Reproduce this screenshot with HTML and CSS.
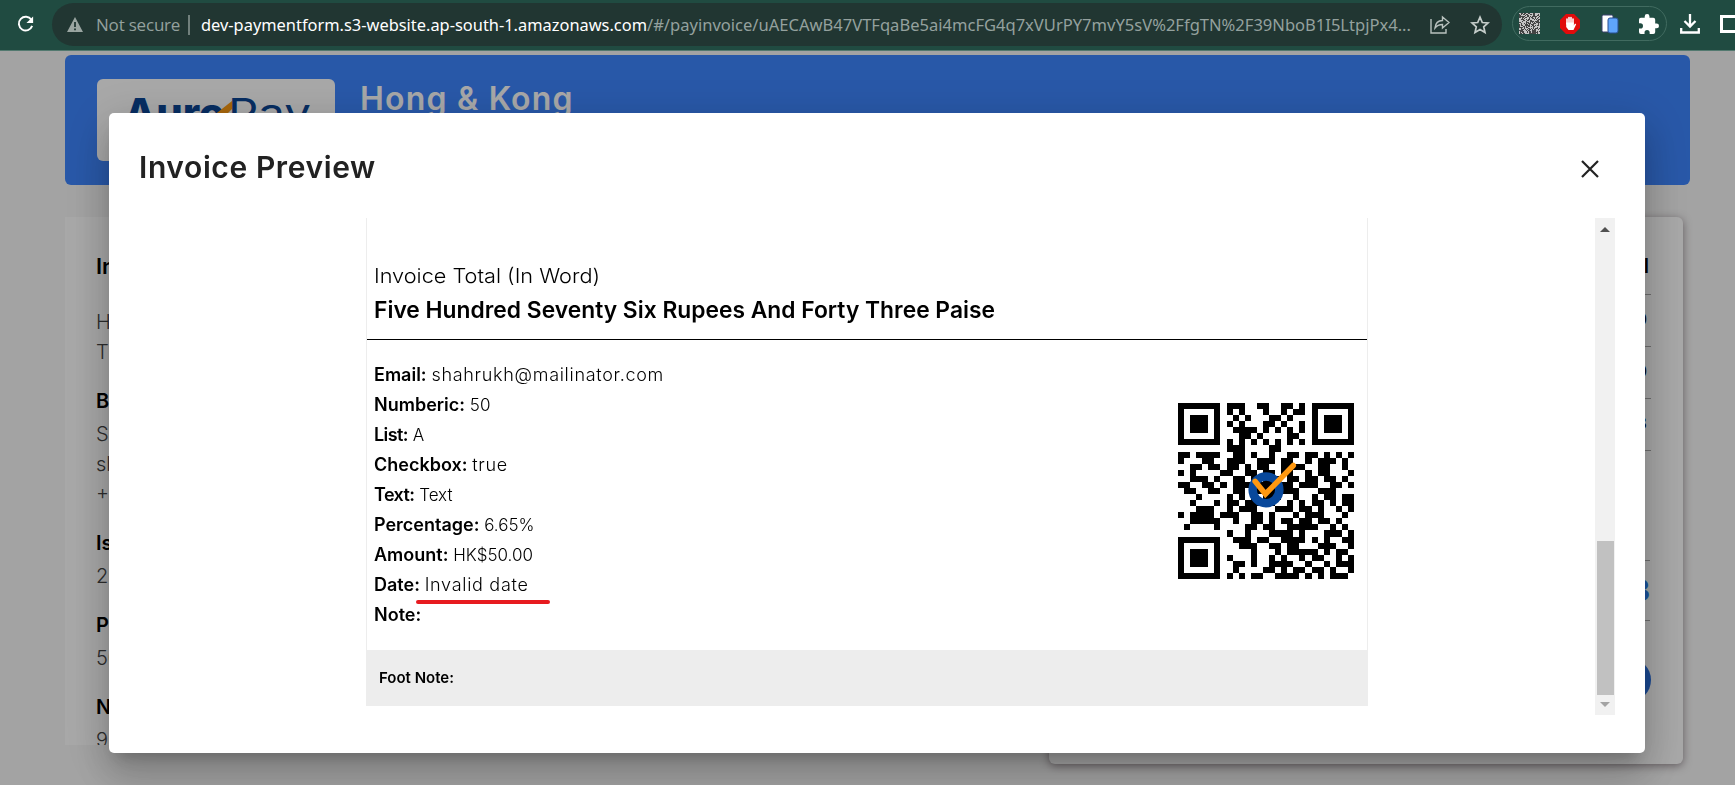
FILE: index.html
```html
<!DOCTYPE html>
<html lang="en">
<head>
    <meta charset="UTF-8">
    <meta name="viewport" content="width=device-width, initial-scale=1.0">
    <title>Invoice Preview</title>
    <link rel="stylesheet" href="styles.css">
</head>
<body>
    <!-- Browser toolbar -->
    <header class="toolbar">
        <svg class="reload" width="20" height="20" viewBox="0 0 20 20"><path d="M16.200 5.600A7.200 7.200 0 1 0 17 12" fill="none" stroke="#fff" stroke-width="2"/><path d="M18 2v7h-7z" fill="#fff"/></svg>
        <div class="address">
            <svg class="warning" width="16" height="15" viewBox="0 0 16 15"><path d="M8 0l8 15H0z" fill="#9aa5a1"/><path d="M8 5v5M8 11.500v1.800" stroke="#213632" stroke-width="1.800"/></svg>
            <span class="not-secure">Not secure</span>
            <span class="divider"></span>
            <span class="url"><svg width="1212" height="30"><text x="0" y="21" textLength="446" lengthAdjust="spacingAndGlyphs" fill="#fff">dev-paymentform.s3-website.ap-south-1.amazonaws.com</text><text x="446" y="21" textLength="764" lengthAdjust="spacingAndGlyphs" fill="#94a19e">/#/payinvoice/uAECAwB47VTFqaBe5ai4mcFG4q7xVUrPY7mvY5sV%2FfgTN%2F39NboB1I5LtpjPx4...</text></svg></span>
            <svg class="share" width="20" height="20" viewBox="0 0 20 20" fill="none" stroke="#b9c2bf" stroke-width="1.400"><path d="M1 4v14h15v-4"/><path d="M5 13c.5-5 3-7.500 7.500-7.500V2L19 7.500 12.500 13V9.500C9 9.500 7 10.500 5 13z"/></svg>
            <svg class="star" width="20" height="20" viewBox="0 0 20 20" fill="none" stroke="#c5cdca" stroke-width="1.700"><path d="M10 2.200l2.300 5.300 5.700.500-4.300 3.800 1.300 5.700-5-3-5 3 1.300-5.700L2 8l5.700-.500z"/></svg>
        </div>
        <div class="extensions">
            <svg id="miniCode" width="21" height="21" viewBox="0 0 21 21" shape-rendering="crispEdges"></svg>
            <svg width="20" height="20" viewBox="0 0 20 20"><path d="M6 0h8l6 6v8l-6 6H6l-6-6V6z" fill="#e10b0b"/><path d="M7 10V5M9 9V3.500M11 9V3.500M13 10V5" stroke="#fff" stroke-width="1.600" stroke-linecap="round"/><path d="M6.200 8.500h7.600v3l1.200-2 1.200.700L13.500 16h-5l-2.300-3z" fill="#fff"/></svg>
            <svg width="18" height="20" viewBox="0 0 18 20"><rect x="1" y="1" width="11" height="17" rx="1.500" fill="#fff" stroke="#3c4270"/><rect x="7" y="4" width="10" height="15" rx="2" fill="#5fa5fb" stroke="#294f91"/></svg>
            <svg width="20" height="20" viewBox="2 1 21 21"><path d="M20.500 11H19V7a2 2 0 0 0-2-2h-4V3.500a2.500 2.500 0 0 0-5 0V5H4a2 2 0 0 0-2 2v3.800h1.500a2.700 2.700 0 0 1 0 5.400H2V20a2 2 0 0 0 2 2h3.800v-1.500a2.700 2.700 0 0 1 5.400 0V22H17a2 2 0 0 0 2-2v-4h1.500a2.500 2.500 0 0 0 0-5z" fill="#fff"/></svg>
        </div>
        <svg class="download" width="20" height="20" viewBox="0 0 20 20" fill="none" stroke="#fff" stroke-width="2.300"><path d="M10 0v12M4.500 7l5.500 5.500L15.500 7M1.200 14v4.500h17.600V14"/></svg>
        <span class="panel-icon"></span>
    </header>

    <!-- Payment page behind the dialog -->
    <main class="page">
        <section class="banner">
            <div class="logo">
                <svg width="196" height="56" viewBox="0 0 196 56">
                    <text x="1" y="44" font-size="41" font-weight="800" textLength="101" lengthAdjust="spacingAndGlyphs" fill="#0a4595">Auro</text>
                    <text x="105" y="44" font-size="41" textLength="83" lengthAdjust="spacingAndGlyphs" fill="#0a4595">Pay</text>
                    <path d="M90 32l19-15v8L96 38z" fill="#ff9d13"/>
                </svg>
            </div>
            <h1>Hong &amp; Kong</h1>
        </section>
        <div class="columns">
            <section class="details">
                <h2>Invoice From</h2>
                <p>Hong &amp; Kong<br>Thane</p>
                <h3>Bill To</h3>
                <p>Shahrukh<br>shahrukh@mailinator.com<br>+91</p>
                <h3>Issue Date</h3>
                <p>2023</p>
                <h3>Percentage</h3>
                <p>50</p>
                <h3>Note</h3>
                <p>9</p>
            </section>
            <section class="summary">
                <h2>Total</h2>
                <div class="row">0</div>
                <div class="row">0</div>
                <div class="row">3</div>
                <div class="total">3</div>
                <div class="pay"></div>
            </section>
        </div>
    </main>
    <div class="overlay"></div>

    <!-- Invoice dialog -->
    <div class="dialog">
        <div class="dialog-head">
            <h2>Invoice Preview</h2>
            <svg width="18" height="18" viewBox="0 0 18 18"><path d="M1 1l16 16M17 1L1 17" stroke="#222" stroke-width="2.200"/></svg>
        </div>
        <div class="dialog-body">
            <div class="invoice">
                <div class="words">
                    <p><svg width="230" height="34"><text x="0" y="25" font-size="20" textLength="226" lengthAdjust="spacingAndGlyphs" class="light">Invoice Total (In Word)</text></svg></p>
                    <p><svg width="630" height="34"><text x="0" y="26" font-size="22.500" textLength="621" lengthAdjust="spacingAndGlyphs" font-weight="600">Five Hundred Seventy Six Rupees And Forty Three Paise</text></svg></p>
                </div>
                <div class="info">
                    <ul class="fields">
                        <li><b>Email:</b> <span class="wide">shahrukh@mailinator.com</span></li>
                        <li><b>Numberic:</b> <span>50</span></li>
                        <li><b class="narrow">List:</b> <span>A</span></li>
                        <li><b>Checkbox:</b> <span class="wide">true</span></li>
                        <li><b class="narrow">Text:</b> <span>Text</span></li>
                        <li><b>Percentage:</b> <span>6.65%</span></li>
                        <li><b>Amount:</b> <span>HK$50.00</span></li>
                        <li class="date"><b>Date:</b> <span class="wide">Invalid date</span></li>
                        <li><b>Note:</b></li>
                    </ul>
                    <svg id="qrCode" width="176" height="176" viewBox="0 0 29 29" shape-rendering="crispEdges"></svg>
                </div>
                <div class="foot-note">Foot Note:</div>
            </div>
            <div class="scrollbar">
                <span class="arrow-up"></span>
                <span class="thumb"></span>
                <span class="arrow-down"></span>
            </div>
        </div>
    </div>

    <script src="script.js"></script>
</body>
</html>
```

FILE: styles.css
```css
* {
    box-sizing: border-box;
}
body {
    margin: 0;
    height: 785px;
    overflow: hidden;
    font-family: Inter, "Open Sans", sans-serif;
    background: #f7f7f7;
    color: #000;
}
h1, h2, h3, p, ul {
    margin: 0;
    padding: 0;
}
svg {
    display: block;
    flex: none;
}

/* Toolbar */
.toolbar {
    position: relative;
    z-index: 3;
    display: flex;
    align-items: center;
    height: 51px;
    padding-left: 16px;
    background: #204b41;
    border-bottom: 1px solid #52796f;
    overflow: hidden;
}
.reload {
    width: 19px;
    margin: -2px 17px 0 0;
}
.address {
    display: flex;
    align-items: center;
    flex: none;
    width: 1450px;
    height: 43px;
    margin-top: -1px;
    padding-left: 15px;
    border-radius: 22px;
    background: #213632;
    font-family: "Open Sans", sans-serif;
    font-size: 17px;
}
.not-secure {
    width: 84px;
    margin: -1px 0 0 13px;
    color: #94a19e;
    letter-spacing: -0.2px;
    white-space: nowrap;
}
.divider {
    width: 2px;
    height: 20px;
    margin: 0 11px 0 8px;
    background: #71807c;
}
.url {
    width: 1212px;
    font-family: "Noto Sans", sans-serif;
}
.url svg {
    overflow: visible;
}
.share {
    margin-left: 17px;
}
.star {
    margin-left: 20px;
}
.extensions {
    display: flex;
    align-items: center;
    justify-content: space-between;
    flex: none;
    width: 155px;
    height: 35px;
    margin: -3px 0 0 10px;
    padding: 0 7px 0 6px;
    border: 1px solid #416b60;
    border-radius: 18px;
}
.download {
    margin: -3px 20px 0 13px;
}
.panel-icon {
    flex: none;
    width: 20px;
    height: 18px;
    margin-top: -3px;
    border: 3px solid #fff;
}

/* Page */
.page {
    padding: 4px 45px 0 65px;
}
.banner {
    display: flex;
    height: 130px;
    padding: 24px 32px;
    border-radius: 6px;
    background: #3e86ff;
}
.logo {
    width: 238px;
    height: 82px;
    padding: 5px 26px;
    border-radius: 6px;
    background: #fff;
}
.banner h1 {
    margin-left: 25px;
    font-size: 32px;
    font-weight: 600;
    letter-spacing: 1.2px;
    line-height: 40px;
    color: #fff;
}
.columns {
    display: flex;
    align-items: flex-start;
    justify-content: space-between;
    padding: 32px 7px 0 0;
}
.details {
    width: 960px;
    height: 528px;
    padding: 33px 31px;
    overflow: hidden;
    background: #fff;
    font-size: 20px;
    line-height: 30px;
}
.details h2 {
    margin-bottom: 25px;
    font-size: 22px;
    font-weight: 600;
    line-height: 32px;
}
.details h3 {
    margin: 18px 0 2px;
    font-size: 20px;
    font-weight: 600;
    line-height: 32px;
}
.details p {
    font-weight: 300;
    color: #444;
}
.summary {
    width: 634px;
    height: 547px;
    padding: 32px;
    border-radius: 6px;
    background: #fff;
    box-shadow: 0 2px 8px rgba(60, 40, 50, 0.5);
    text-align: right;
}
.summary h2 {
    height: 46px;
    padding-right: 2px;
    border-bottom: 1px solid #aaa;
    font-size: 20px;
    font-weight: 600;
    line-height: 34px;
}
.summary .row {
    height: 52px;
    padding-right: 4px;
    border-bottom: 1px solid #aaa;
    font-size: 16px;
    line-height: 49px;
}
.summary .total {
    height: 61px;
    margin: 109px 1px 0 0;
    border-top: 1px solid #aaa;
    border-bottom: 1px solid #aaa;
    font-size: 30px;
    font-weight: 800;
    line-height: 58px;
    color: #287cf0;
}
.summary .pay {
    height: 44px;
    margin-top: 37px;
    border-radius: 22px;
    background: #286fdf;
}
.overlay {
    position: fixed;
    inset: 51px 0 0;
    background: rgba(0, 0, 0, 0.34);
}

/* Dialog */
.dialog {
    position: fixed;
    top: 113px;
    left: 109px;
    z-index: 2;
    width: 1536px;
    height: 640px;
    padding: 0 30px;
    border-radius: 5px;
    background: #fff;
    box-shadow: 0 11px 15px -7px rgba(0, 0, 0, 0.2), 0 24px 38px 3px rgba(0, 0, 0, 0.14), 0 9px 46px 8px rgba(0, 0, 0, 0.12);
}
.dialog-head {
    display: flex;
    align-items: center;
    justify-content: space-between;
    height: 105px;
    padding-right: 16px;
    padding-top: 6px;
}
.dialog-head h2 {
    margin-top: -3px;
    font-size: 30px;
    font-weight: 600;
    letter-spacing: 0.6px;
    color: #222;
}
.dialog-body {
    display: flex;
    justify-content: space-between;
    height: 497px;
}
.invoice {
    width: 1002px;
    height: 488px;
    margin-left: 227px;
    border: solid #ededed;
    border-width: 0 1px;
}
.words {
    height: 122px;
    padding: 40px 7px 0;
    border-bottom: 1px solid #000;
}
.words .light {
    font-weight: 300;
}
.info {
    display: flex;
    justify-content: space-between;
    height: 310px;
    padding: 20px 13px 0 7px;
}
.fields {
    list-style: none;
    font-size: 17px;
    line-height: 30px;
    font-weight: 300;
}
.fields li {
    height: 30px;
}
.fields b {
    font-size: 18px;
    font-weight: 600;
}
.fields .narrow {
    letter-spacing: -0.6px;
}
.fields .wide {
    font-size: 18px;
    letter-spacing: 0.7px;
}
.date {
    position: relative;
}
/* Red mark under the date */
.date::after {
    content: "";
    position: absolute;
    left: 42px;
    bottom: -4px;
    width: 134px;
    height: 4px;
    border-radius: 2px;
    background: #e71b20;
}
#qrCode {
    margin-top: 43px;
    overflow: visible;
}
.foot-note {
    height: 56px;
    margin: 0 -1px;
    padding-left: 13px;
    background: #ededed;
    font-size: 15px;
    font-weight: 600;
    line-height: 55px;
}
.scrollbar {
    display: flex;
    flex-direction: column;
    align-items: center;
    width: 20px;
    height: 497px;
    padding: 9px 0 8px;
    background: #f1f1f1;
}
.arrow-up, .arrow-down {
    border: 5px solid transparent;
}
.arrow-up {
    border-top: 0;
    border-bottom-color: #505050;
}
.arrow-down {
    margin-top: auto;
    border-bottom: 0;
    border-top-color: #a3a3a3;
}
.thumb {
    width: 17px;
    height: 154px;
    margin-top: 309px;
    background: #c1c1c1;
}
```

FILE: script.js
```js
const rows = [
    '11111110111001100110101111111',
    '10000010101000100101101000001',
    '10111010010100011010001011101',
    '10111010101000110100101011101',
    '10111010011110101010101011101',
    '10000010001101000011001000001',
    '11111110101010101010101111111',
    '00000000111000011000000000000',
    '11011110011010010011011010101',
    '10001100111001110110010111010',
    '00110110110101100111100110010',
    '10100001100110110110010110001',
    '00111010011010111011011011010',
    '11001101011111110110111001101',
    '01100110011011110111000111000',
    '00010000101010111001001011011',
    '00100010110111110010101101011',
    '00011100101110001110110100101',
    '10111101110011010001011100010',
    '00111110010011010110110110100',
    '01000010000110110011111001010',
    '00000000100100011110100011101',
    '11111110011101100111101010011',
    '10000010001110011011000111001',
    '10111010000010001011111010110',
    '10111010100010010100101100101',
    '10111010011010011110010010111',
    '10000010010000110101101101001',
    '11111110101011001111010101110'
];

// Invoice QR code with the logo in the middle
const qr = document.getElementById('qrCode');
let path = '';
rows.forEach((row, y) => {
    [...row].forEach((cell, x) => {
        if (cell === '1') {
            path += `M${x} ${y}h1v1h-1z`;
        }
    });
});
qr.innerHTML = `
    <path d="${path}"/>
    <g shape-rendering="auto" fill="none">
        <circle cx="14.500" cy="14.300" r="2.200" stroke="#08489b" stroke-width="1.400"/>
        <path d="M12.700 12.900l1.700 2.100 4.600-4.700" stroke="#ff9810" stroke-width=".9" stroke-linecap="round"/>
    </g>`;

// Small code icon in the toolbar
let dots = '';
let seed = 7;
for (let y = 0; y < 21; y++) {
    for (let x = 0; x < 21; x++) {
        seed = (seed * 1103515 + 12345) % 65537;
        if (seed % 100 < 48) {
            dots += `M${x} ${y}h1v1h-1z`;
        }
    }
}
document.getElementById('miniCode').innerHTML = `<rect width="21" height="21" fill="#c4c4c4"/><path d="${dots}" fill="#444"/>`;
```
